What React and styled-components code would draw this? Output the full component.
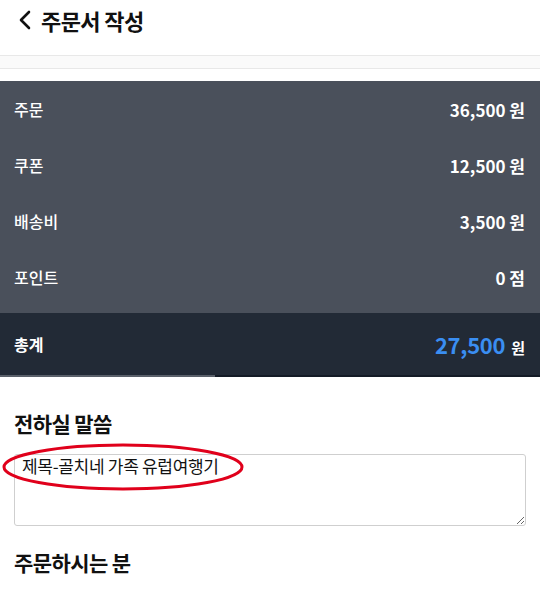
import React from "react";
import styled, { createGlobalStyle } from "styled-components";

const GlobalStyle = createGlobalStyle`
  html, body {
    margin: 0;
    padding: 0;
    background: #fff;
    font-family: "Noto Sans CJK KR", "Noto Sans", sans-serif;
    color: #111;
  }
`;

const Page = styled.div`
  width: 540px;
`;

const Header = styled.header`
  height: 55px;
  display: flex;
  align-items: flex-start;
  padding: 6px 0 0 18px;
  box-sizing: border-box;
  gap: 9px;
`;

const BackIcon = styled.svg`
  margin-top: 4px;
  flex-shrink: 0;
`;

const Title = styled.h1`
  margin: 0;
  font-size: 22px;
  font-weight: 700;
  line-height: 28px;
  letter-spacing: -0.6px;
`;

const Band = styled.div`
  height: 12px;
  background: #fafafa;
  border-top: 1px solid #e8e8e8;
  border-bottom: 1px solid #e8e8e8;
  margin-bottom: 12px;
`;

const Summary = styled.section`
  background: #4a505b;
  color: #fff;
`;

const Rows = styled.div`
  padding-bottom: 8px;
`;

const Row = styled.div`
  height: 56px;
  display: flex;
  align-items: center;
  justify-content: space-between;
  padding: 0 15px 0 14px;
`;

const Label = styled.span`
  font-size: 16px;
  font-weight: ${(p) => (p.$bold ? 700 : 500)};
`;

const Value = styled.span`
  font-size: 17px;
  font-weight: 700;
`;

const Total = styled.div`
  height: 62px;
  display: flex;
  align-items: center;
  justify-content: space-between;
  padding: 0 15px 0 14px;
  background: #222a36;
  color: #fff;
  border-bottom: 2px solid #141b26;
  position: relative;
`;

const Progress = styled.div`
  position: absolute;
  left: 0;
  bottom: -2px;
  height: 2px;
  width: 215px;
  background: #5a606a;
`;

const TotalAmount = styled.span`
  display: flex;
  align-items: baseline;
  gap: 6px;
`;

const Big = styled.span`
  font-size: 22px;
  font-weight: 700;
  color: #3a8ef2;
  letter-spacing: -0.3px;
`;

const Unit = styled.span`
  font-size: 15px;
  font-weight: 700;
`;

const Section = styled.section`
  padding: 31px 14px 0;
  position: relative;
`;

const Heading = styled.h2`
  margin: 0 0 16px;
  font-size: 21px;
  font-weight: 700;
  line-height: 30px;
  letter-spacing: -0.6px;
`;

const Message = styled.textarea`
  display: block;
  width: 100%;
  height: 72px;
  box-sizing: border-box;
  border: 1px solid #cfcfcf;
  border-radius: 3px;
  padding: 1px 7px 0;
  font-family: "Noto Sans CJK KR", sans-serif;
  font-size: 17px;
  font-weight: 400;
  line-height: 20px;
  letter-spacing: -0.3px;
  color: #111;
  margin-bottom: 21px;
  resize: vertical;
  outline: none;
`;

const Mark = styled.svg`
  position: absolute;
  left: 2px;
  top: 65px;
  pointer-events: none;
`;

const rows = [
  ["주문", "36,500 원"],
  ["쿠폰", "12,500 원"],
  ["배송비", "3,500 원"],
  ["포인트", "0 점"],
];

export default function App() {
  return (
    <Page>
      <GlobalStyle />
      <Header>
        <BackIcon width="14" height="20" viewBox="0 0 14 20">
          <polyline points="11,2 3,10 11,18" fill="none" stroke="#111" strokeWidth="2.6" strokeLinecap="round" strokeLinejoin="round" />
        </BackIcon>
        <Title>주문서 작성</Title>
      </Header>
      <Band />
      <Summary>
        <Rows>
          {rows.map(([label, value]) => (
            <Row key={label}>
              <Label>{label}</Label>
              <Value>{value}</Value>
            </Row>
          ))}
        </Rows>
        <Total>
          <Label $bold>총계</Label>
          <TotalAmount>
            <Big>27,500</Big>
            <Unit>원</Unit>
          </TotalAmount>
          <Progress />
        </Total>
      </Summary>
      <Section>
        <Heading>전하실 말씀</Heading>
        <Message readOnly defaultValue="제목-골치네 가족 유럽여행기" />
        <Heading>주문하시는 분</Heading>
        <Mark width="244" height="50" viewBox="0 0 244 50">
          <ellipse cx="121" cy="25" rx="119" ry="22" fill="none" stroke="#e0001b" strokeWidth="3" />
        </Mark>
      </Section>
    </Page>
  );
}
